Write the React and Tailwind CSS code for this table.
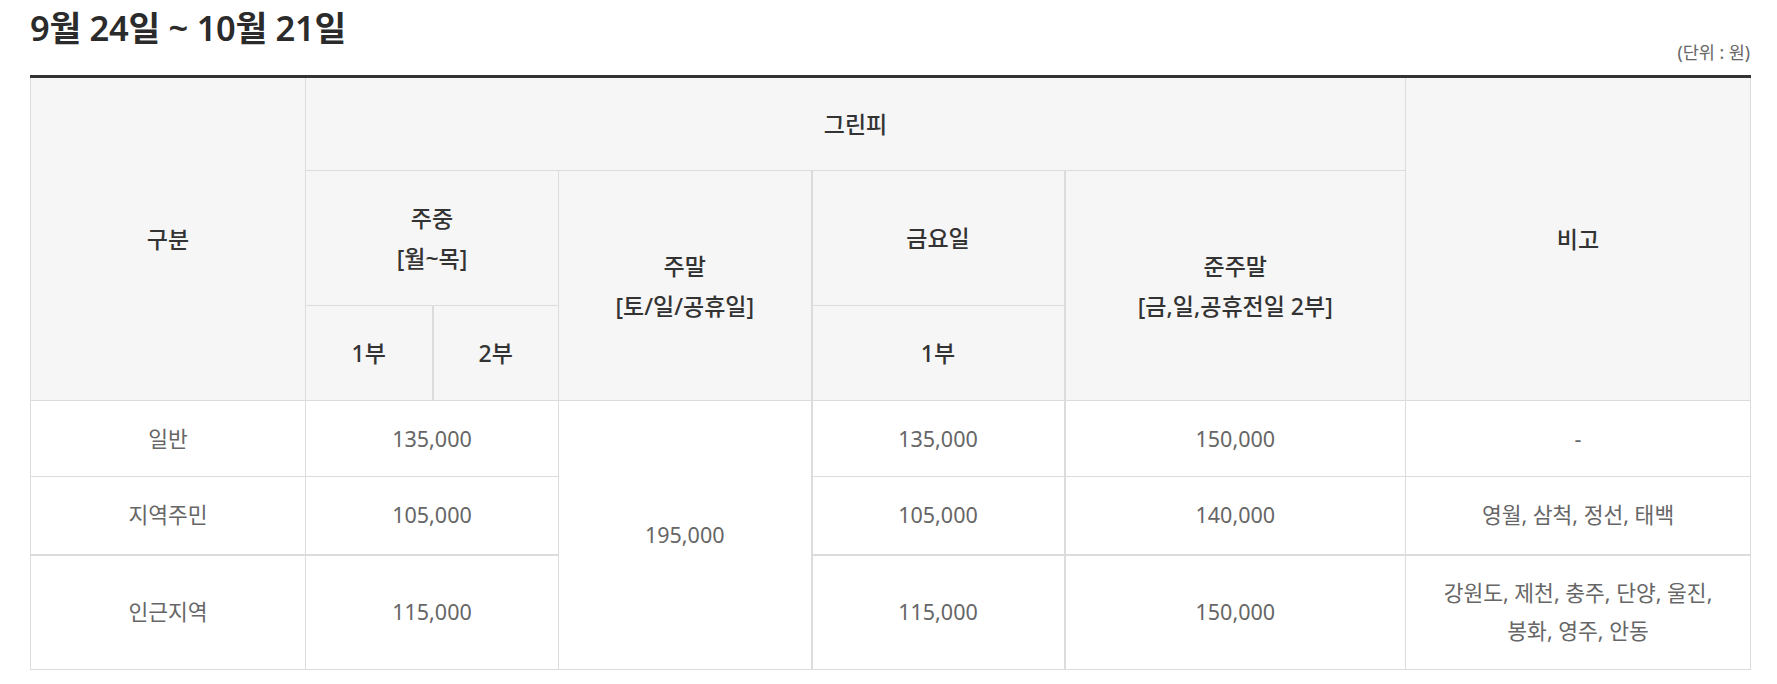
const font = { fontFamily: "'Noto Sans', 'Noto Sans CJK KR', sans-serif" };

const rows = [
  { name: "일반", weekday: "135,000", fri: "135,000", semi: "150,000", note: "-", h: "h-[76px]" },
  { name: "지역주민", weekday: "105,000", fri: "105,000", semi: "140,000", note: "영월, 삼척, 정선, 태백", h: "h-[78px]" },
  {
    name: "인근지역",
    weekday: "115,000",
    fri: "115,000",
    semi: "150,000",
    note: (
      <>
        강원도, 제천, 충주, 단양, 울진,
        <br />
        봉화, 영주, 안동
      </>
    ),
    h: "h-[115px]",
  },
];

function Th({ children, className = "", ...rest }) {
  return (
    <th
      {...rest}
      className={
        "border border-[#dcdcdc] bg-[#f6f6f6] text-center align-middle text-[23px] font-medium leading-[40px] text-[#333] " +
        className
      }
    >
      {children}
    </th>
  );
}

function Td({ children, className = "", ...rest }) {
  return (
    <td
      {...rest}
      className={
        "border border-[#dcdcdc] bg-white text-center align-middle text-[21.5px] font-normal leading-[38px] text-[#666] " +
        className
      }
    >
      {children}
    </td>
  );
}

export default function App() {
  return (
    <div className="min-h-[684px] w-[1777px] bg-white pl-[30px]" style={font}>
      <div className="flex h-[75px] w-[1720px] items-end justify-between">
        <h2 className="mb-auto mt-[7px] text-[34.5px] font-semibold leading-[42px] tracking-[-0.3px] text-[#2b2b2b]">
          9월 24일 ~ 10월 21일
        </h2>
        <p className="pb-[13px] text-[17.5px] leading-[20px] text-[#666]">(단위 : 원)</p>
      </div>

      <table className="w-[1720px] table-fixed border-collapse border-t-[3px] border-t-[#333]">
        <colgroup>
          <col className="w-[275px]" />
          <col className="w-[127px]" />
          <col className="w-[126px]" />
          <col className="w-[253px]" />
          <col className="w-[253px]" />
          <col className="w-[341px]" />
          <col className="w-[345px]" />
        </colgroup>
        <thead>
          <tr className="h-[94px]">
            <Th rowSpan={3} className="border-t-[3px] border-t-[#333]">구분</Th>
            <Th colSpan={5} className="border-t-[3px] border-t-[#333]">그린피</Th>
            <Th rowSpan={3} className="border-t-[3px] border-t-[#333]">비고</Th>
          </tr>
          <tr className="h-[135px]">
            <Th colSpan={2}>
              주중
              <br />
              [월~목]
            </Th>
            <Th rowSpan={2}>
              주말
              <br />
              [토/일/공휴일]
            </Th>
            <Th className="border-x-2">금요일</Th>
            <Th rowSpan={2}>
              준주말
              <br />
              [금,일,공휴전일 2부]
            </Th>
          </tr>
          <tr className="h-[95px]">
            <Th className="border-r-2">1부</Th>
            <Th>2부</Th>
            <Th className="border-x-2">1부</Th>
          </tr>
        </thead>
        <tbody>
          {rows.map((r, i) => (
            <tr key={r.name} className={r.h}>
              <Td className={i === 1 ? "border-b-2" : ""}>{r.name}</Td>
              <Td colSpan={2} className={i === 1 ? "border-b-2" : ""}>
                {r.weekday}
              </Td>
              {i === 0 && <Td rowSpan={3}>195,000</Td>}
              <Td className={"border-x-2 " + (i === 1 ? "border-b-2" : "")}>{r.fri}</Td>
              <Td className={i === 1 ? "border-b-2" : ""}>{r.semi}</Td>
              <Td className={i === 1 ? "border-b-2" : ""}>{r.note}</Td>
            </tr>
          ))}
        </tbody>
      </table>
    </div>
  );
}
